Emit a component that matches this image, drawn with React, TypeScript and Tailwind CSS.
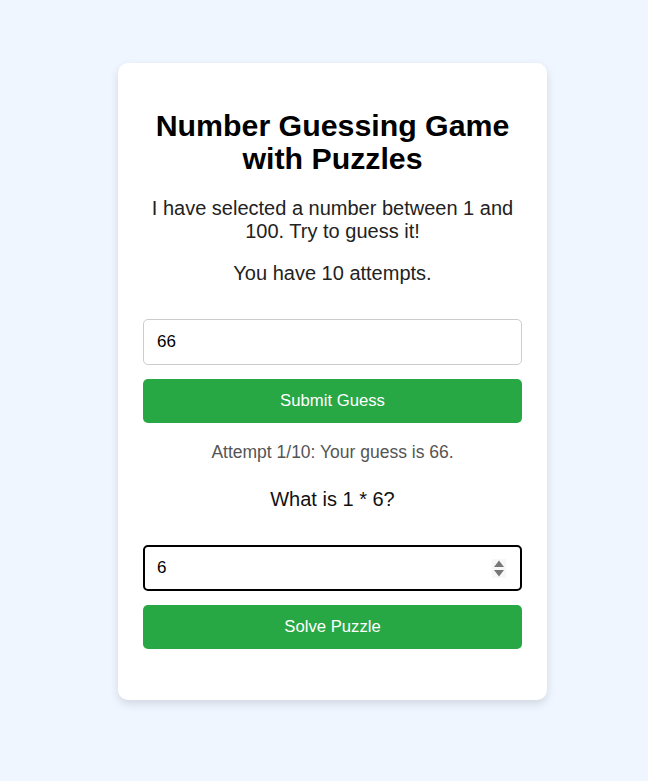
import React from "react";

export default function App() {
  return (
    <div className="min-h-[781px] w-full bg-[#eff6ff] font-['Liberation_Sans',Arial,sans-serif] pt-[63px] pb-[81px]">
      <div className="ml-[118px] w-[429px] rounded-[10px] bg-white shadow-[0_4px_10px_rgba(0,0,0,0.12)] px-[25px] pt-[25px] pb-[51px] text-center">
        <h1 className="mt-[21px] text-[30.3px] leading-[33px] font-bold text-black">
          Number Guessing Game with Puzzles
        </h1>
        <p className="mt-[22px] text-[20px] leading-[23px] text-[#222]">
          I have selected a number between 1 and 100. Try to guess it!
        </p>
        <p className="mt-[19px] text-[20px] leading-[23px] text-[#222]">You have 10 attempts.</p>
        <input
          type="text"
          defaultValue="66"
          className="mt-[34px] block w-full h-[46px] rounded-[5px] border border-[#ccc] px-[13px] text-[17px] text-black outline-none"
        />
        <button className="mt-[14px] block w-full h-[44px] rounded-[5px] bg-[#28a745] text-white text-[16.7px]">
          Submit Guess
        </button>
        <p className="mt-[19px] text-[17.5px] leading-[21px] text-[#555]">Attempt 1/10: Your guess is 66.</p>
        <p className="mt-[25px] text-[20px] leading-[23px] text-[#111]">What is 1 * 6?</p>
        <div className="relative mt-[34px] h-[46px]">
          <input
            type="text"
            defaultValue="6"
            className="block w-full h-[46px] rounded-[5px] border-2 border-black px-[12px] text-[17px] text-black outline-none"
          />
          <div className="absolute right-[16px] top-[14px] w-[14px] h-[19px] bg-[#f7f7f7] flex items-center justify-center">
            <svg width="12" height="19" viewBox="0 0 12 19">
              <path d="M6 1.5 L11 8 L1 8 Z" fill="#777" />
              <path d="M1 11 L11 11 L6 17.5 Z" fill="#777" />
            </svg>
          </div>
        </div>
        <button className="mt-[14px] block w-full h-[44px] rounded-[5px] bg-[#28a745] text-white text-[16.7px]">
          Solve Puzzle
        </button>
      </div>
    </div>
  );
}
